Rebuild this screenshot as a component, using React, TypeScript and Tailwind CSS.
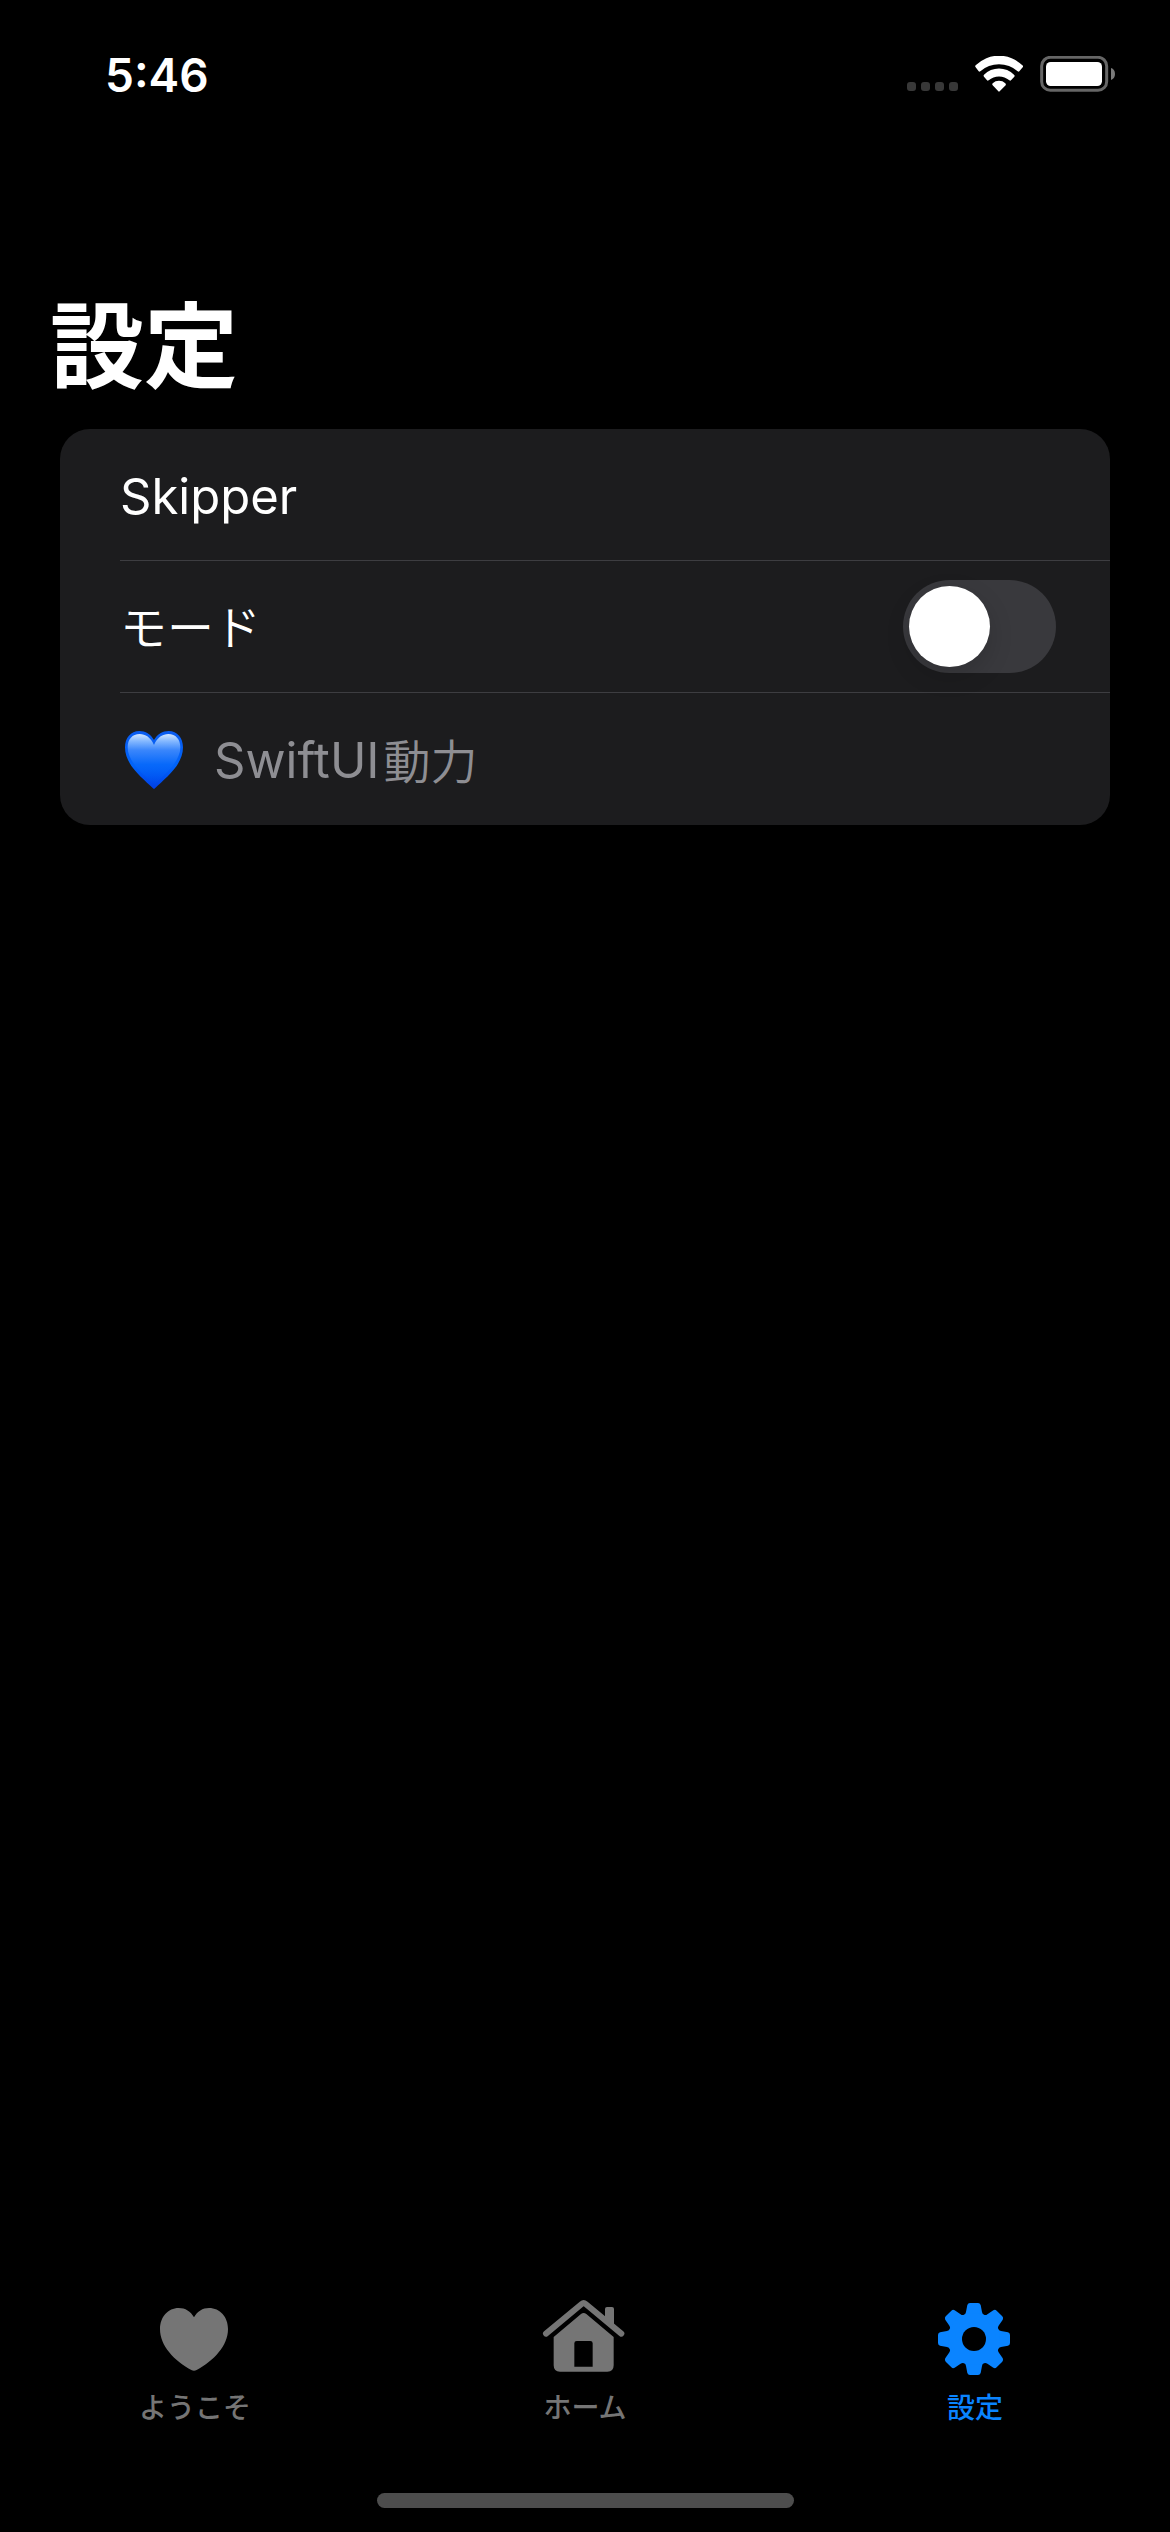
import { useState } from "react";
import type { ReactNode } from "react";

const latin = "font-['Inter','Noto_Sans_CJK_JP',sans-serif]";
const japanese = "font-['Noto_Sans_CJK_JP',sans-serif]";

function StatusBar() {
  return (
    <header className="flex h-[148px] items-center justify-between pr-[55px] pl-[105px]">
      <time className="pt-0.5 text-[46px] leading-[54px] font-semibold">5:46</time>
      <div className="flex items-center gap-[17px]">
        <svg className="h-[36px] w-[51px] fill-[#383838]" viewBox="0 0 51 36" aria-label="No signal">
          <rect x="0" y="26" width="9" height="9" rx="3" />
          <rect x="14" y="26" width="9" height="9" rx="3" />
          <rect x="28" y="26" width="9" height="9" rx="3" />
          <rect x="42" y="26" width="9" height="9" rx="3" />
        </svg>
        <svg className="h-[36px] w-[48px] fill-white" viewBox="285 75 144 108" aria-label="Wi-Fi">
          <path d="M287 109Q284 106 287 103A99 99 0 0 1 427 103Q431 106 428 109L418 121Q416 123 413 121A84 84 0 0 0 301 121Q298 123 296 121Z" />
          <path d="M312 137Q309 134 312 131A64 64 0 0 1 402 131Q406 134 403 137L393 148Q391 150 388 148A48 48 0 0 0 326 148Q323 150 321 148Z" />
          <path d="M338 163Q335 160 338 157A28 28 0 0 1 376 157Q379 160 377 163L359 181Q357 183 355 181Z" />
        </svg>
        <svg className="h-[36px] w-[75px]" viewBox="480 78 225 108" aria-label="Battery full">
          <rect x="485" y="82" width="195" height="99" rx="26" fill="none" stroke="#666" strokeWidth="9" />
          <rect x="498" y="96" width="168" height="72" rx="14" fill="#fff" />
          <path d="M693 114Q705 118 705 132Q705 146 693 150Z" fill="#7a7a7a" />
        </svg>
      </div>
    </header>
  );
}

function BlueHeart() {
  return (
    <svg className="h-[60px] w-[60px]" viewBox="282 509 180 180" role="img" aria-label="Blue heart">
      <defs>
        <linearGradient id="heart-body" x1="0" y1="0" x2="0" y2="1">
          <stop offset="0" stopColor="#0a5cf0" />
          <stop offset="0.6" stopColor="#0064fa" />
          <stop offset="1" stopColor="#003fe6" />
        </linearGradient>
        <linearGradient id="heart-shine" x1="0" y1="0" x2="0" y2="1">
          <stop offset="0" stopColor="#d2e6ff" />
          <stop offset="0.14" stopColor="#84b8ff" />
          <stop offset="0.32" stopColor="#3a86fb" />
          <stop offset="0.6" stopColor="#0869fa" />
          <stop offset="1" stopColor="#0056f2" stopOpacity="0" />
        </linearGradient>
      </defs>
      <path
        d="M372 542C362 524 346 515 328 515C302 515 285 536 285 564C285 618 338 656 369 687Q372 690 375 687C406 656 459 618 459 564C459 536 442 515 416 515C398 515 382 524 372 542Z"
        fill="url(#heart-body)"
      />
      <path
        d="M372 557C362 534 346 524 329 524C307 524 293 540 293 564C293 608 340 645 372 676C404 645 451 608 451 564C451 540 437 524 415 524C398 524 382 534 372 557Z"
        fill="url(#heart-shine)"
      />
    </svg>
  );
}

function HeartIcon() {
  return (
    <svg className="h-[90px] w-[90px] fill-current" viewBox="90 60 270 270" aria-hidden="true">
      <path d="M222 142C212 124 196 114 176 114C144 114 120 141 120 177C120 228 163 272 214 300Q222 305 230 300C281 272 324 228 324 177C324 141 300 114 267 114C248 114 232 124 222 142Z" />
    </svg>
  );
}

function HouseIcon() {
  return (
    <svg className="h-[90px] w-[90px] fill-current" viewBox="120 60 270 270" aria-hidden="true">
      <path d="M138 191L245 102Q251 97 257 102L364 191" fill="none" stroke="currentColor" strokeWidth="18" strokeLinecap="round" />
      <path d="M315 150V117Q315 111 321 111H336Q342 111 342 117V175Z" />
      <path
        fillRule="evenodd"
        d="M161 201L243 132Q251 126 259 132L341 201V286Q341 305 322 305H180Q161 305 161 286ZM230 213Q223 213 223 220V290H278V220Q278 213 271 213Z"
      />
    </svg>
  );
}

function GearIcon() {
  return (
    <svg className="h-[90px] w-[90px] fill-current" viewBox="90 60 270 270" aria-hidden="true">
      <g transform="translate(222 207)">
        {[0, 45, 90, 135, 180, 225, 270, 315].map((angle) => (
          <path
            key={angle}
            transform={`rotate(${angle})`}
            d="M-30 -73Q-25 -74 -24 -81L-20 -102Q-18 -108 -12 -108H12Q18 -108 20 -102L24 -81Q25 -74 30 -73L0 0Z"
          />
        ))}
        <circle r="78" />
        <circle r="36" fill="#000" />
      </g>
    </svg>
  );
}

const tabs: { id: string; label: string; icon: ReactNode }[] = [
  { id: "welcome", label: "ようこそ", icon: <HeartIcon /> },
  { id: "home", label: "ホーム", icon: <HouseIcon /> },
  { id: "settings", label: "設定", icon: <GearIcon /> },
];

export default function App() {
  const [name, setName] = useState("Skipper");
  const [dark, setDark] = useState(false);
  const [active, setActive] = useState("settings");

  return (
    <div className={`flex min-h-screen flex-col bg-black text-white ${latin}`}>
      <StatusBar />
      <main className="flex-1 px-[60px] pt-[132px]">
        <h1 className={`-ml-[10px] text-[94px] leading-[120px] font-bold ${japanese}`}>設定</h1>
        <form className="mt-[29px] rounded-[30px] bg-[#1c1c1e] pl-[60px]">
          <div className="flex h-[132px] items-center border-b border-[#3d3d41] pr-[54px]">
            <input
              type="text"
              aria-label="名前"
              value={name}
              onChange={(e) => setName(e.target.value)}
              className="w-full bg-transparent pt-1 text-[49px] leading-[60px] outline-none"
            />
          </div>
          <div className="flex h-[132px] items-center justify-between border-b border-[#3d3d41] pr-[54px]">
            <label htmlFor="mode" className={`pb-1 text-[47px] leading-[60px] font-[350] ${japanese}`}>
              モード
            </label>
            <input
              id="mode"
              type="checkbox"
              role="switch"
              checked={dark}
              onChange={(e) => setDark(e.target.checked)}
              className="h-[93px] w-[153px] appearance-none rounded-full bg-[#39393d] p-[6px] before:block before:size-[81px] before:rounded-full before:bg-white before:shadow-[0_9px_24px_rgba(0,0,0,0.15)] checked:bg-[#30d158] checked:before:translate-x-[60px]"
            />
          </div>
          <div className="flex h-[132px] items-center gap-[30px] pl-1 text-[#8e8e93]">
            <BlueHeart />
            <p className="flex items-center gap-1 pt-1 text-[49px] leading-[60px]">
              SwiftUI<span className={`pb-1 text-[47px] leading-[60px] font-[350] ${japanese}`}>動力</span>
            </p>
          </div>
        </form>
      </main>
      <nav className="grid grid-cols-3">
        {tabs.map((tab) => (
          <button
            key={tab.id}
            type="button"
            aria-current={active === tab.id ? "page" : undefined}
            onClick={() => setActive(tab.id)}
            className={`flex flex-col items-center gap-1.5 text-[28px] leading-[40px] font-medium ${japanese} ${
              active === tab.id ? "text-[#0a84ff]" : "text-[#757575]"
            }`}
          >
            {tab.icon}
            {tab.label}
          </button>
        ))}
      </nav>
      <div className="mx-auto mt-[67px] mb-6 h-[15px] w-[417px] rounded-full bg-[#4d4d4d]" />
    </div>
  );
}
